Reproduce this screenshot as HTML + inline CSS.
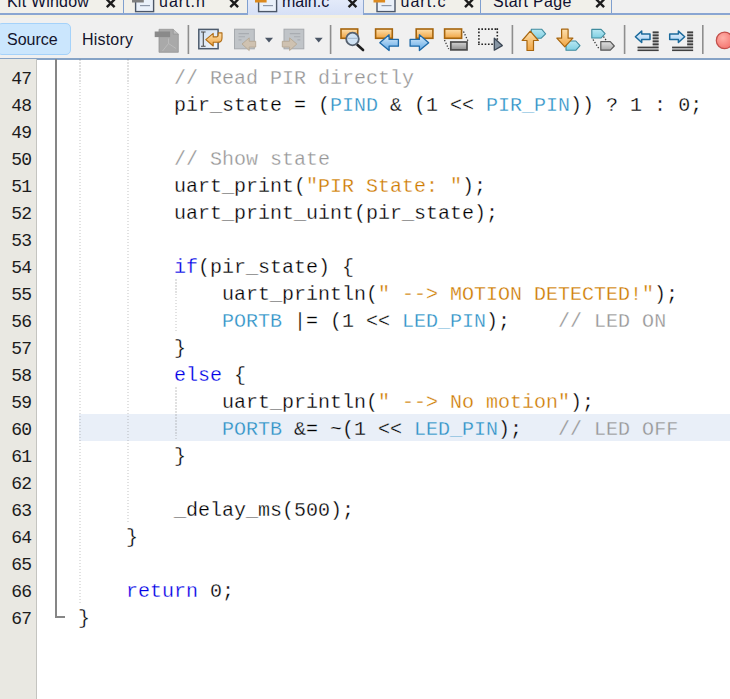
<!DOCTYPE html>
<html><head><meta charset="utf-8"><title>main.c</title>
<style>
html,body{margin:0;padding:0;}
body{width:730px;height:699px;overflow:hidden;position:relative;background:#fff;font-family:"Liberation Sans",sans-serif;}
#tabbar{position:absolute;left:0;top:0;width:730px;height:15px;background:#f0f0f0;overflow:hidden;}
#tabline{position:absolute;left:0;top:13px;width:730px;height:2px;background:#8aa6d2;}
#cream{position:absolute;left:0;top:15px;width:730px;height:3px;background:#f3f0e3;}
#toolbar{position:absolute;left:0;top:18px;width:730px;height:40px;background:#f0f0f0;}
#tbline{position:absolute;left:0;top:58px;width:730px;height:2px;background:#86a3c6;}
.tab{position:absolute;top:0;height:13px;background:#f1f0ea;border-right:1px solid #7f9fcf;box-sizing:border-box;}
.tab.sel{background:linear-gradient(#e3eaf9,#d6e0f6);border-right:none;height:15px;}
.tt{position:absolute;top:-7px;font-size:16px;line-height:18px;color:#101030;white-space:nowrap;}
.tx{position:absolute;top:-1px;width:9px;height:9px;}
#srcbtn{position:absolute;left:-3px;top:23px;width:74px;height:32px;box-sizing:border-box;border:1px solid #a5d2fa;border-radius:5px;background:#cbe6fd;}
.tbt{position:absolute;font-size:16px;line-height:20px;color:#14142c;white-space:nowrap;}
.sep{position:absolute;top:25px;width:1px;height:29px;background:#8c8c8c;}
#gutter{position:absolute;left:0;top:59px;width:36px;height:640px;background:#e9e8e2;border-right:1px solid #c4c4c0;}
#fold{position:absolute;left:55px;top:59px;width:2px;height:559px;background:#868686;}
#foldend{position:absolute;left:55px;top:616px;width:10px;height:2px;background:#868686;}
.guide{position:absolute;width:2px;margin-left:-1px;background:repeating-linear-gradient(to bottom,rgba(120,120,120,0.22) 0,rgba(120,120,120,0.22) 1.5px,rgba(120,120,120,0) 1.5px,rgba(120,120,120,0) 3px);}
#hl{position:absolute;left:79px;top:414px;width:651px;height:27px;background:#e9eff8;}
.ln{position:absolute;left:0;width:31.4px;letter-spacing:-0.7px;text-align:right;font-family:"Liberation Mono",monospace;font-size:18px;line-height:27px;height:27px;color:#1c1c1c;padding-top:3px;box-sizing:border-box;}
.cl{position:absolute;left:78px;font-family:"Liberation Mono",monospace;font-size:20px;line-height:27px;height:27px;white-space:pre;color:#000;-webkit-text-stroke:0.28px #fff;padding-top:2px;box-sizing:border-box;}
.cl.hl{-webkit-text-stroke-color:#e9eff8}
.c{color:#969696} .m{color:#2e92c7} .s{color:#ce7b00} .w{color:#0000e6} .k{color:#000}
svg{position:absolute;left:0;top:0;}
</style></head><body>
<div id="tabbar">
<div id="tabline"></div>
<div class="tab" style="left:0;width:124px"><span class="tt" style="left:7px;letter-spacing:0.2px">Kit Window</span></div>
<div class="tab" style="left:124px;width:124px"><span class="tt" style="left:35px;letter-spacing:1px">uart.h</span></div>
<div class="tab sel" style="left:248px;width:115px"><span class="tt" style="left:34px">main.c</span></div>
<div class="tab" style="left:363px;width:118px;border-left:1px solid #8fa8cf"><span class="tt" style="left:36.5px;letter-spacing:1px">uart.c</span></div>
<div class="tab" style="left:481px;width:131px"><span class="tt" style="left:12px;letter-spacing:0.3px">Start Page</span></div>

</div>
<div id="cream"></div>
<div id="toolbar"></div>
<div id="tbline"></div>
<div id="srcbtn"></div>
<div class="tbt" style="left:7px;top:30px">Source</div>
<div class="tbt" style="left:82px;top:30px;letter-spacing:0.2px">History</div>
<svg width="730" height="59" viewBox="0 0 730 59">
<defs>
<linearGradient id="gO" x1="0" y1="0" x2="0" y2="1"><stop offset="0" stop-color="#fde0ae"/><stop offset="1" stop-color="#f0a441"/></linearGradient>
<linearGradient id="gB" x1="0" y1="0" x2="0" y2="1"><stop offset="0" stop-color="#dcedfc"/><stop offset="1" stop-color="#5fa8e4"/></linearGradient>
<linearGradient id="gG" x1="0" y1="0" x2="0" y2="1"><stop offset="0" stop-color="#d4d4d4"/><stop offset="1" stop-color="#8e8e8e"/></linearGradient>
<linearGradient id="gC" x1="0" y1="0" x2="0" y2="1"><stop offset="0" stop-color="#b9e8f3"/><stop offset="1" stop-color="#7fcfe2"/></linearGradient>
<linearGradient id="gP" x1="0" y1="0" x2="1" y2="1"><stop offset="0" stop-color="#cddcf0"/><stop offset="1" stop-color="#f4f8fc"/></linearGradient>
<radialGradient id="gR" cx="0.4" cy="0.35" r="0.7"><stop offset="0" stop-color="#ffb0a8"/><stop offset="1" stop-color="#f4736e"/></radialGradient>
<pattern id="stripe" width="2" height="2" patternUnits="userSpaceOnUse"><rect width="2" height="1.1" fill="#3c3c3c"/><rect y="1.1" width="2" height="0.9" fill="#b4b4b4"/></pattern>
<linearGradient id="gB2" x1="0" y1="0" x2="0" y2="1"><stop offset="0" stop-color="#eef6fd"/><stop offset="1" stop-color="#9fcdf2"/></linearGradient>
<linearGradient id="gG2" x1="0" y1="0" x2="0" y2="1"><stop offset="0" stop-color="#e0e0e0"/><stop offset="1" stop-color="#aaaaaa"/></linearGradient>
</defs>
<path d="M188.4 25v29M330.6 25v29M512.4 25v29M624.6 25v29M702.8 25v29" stroke="#8e8e8e" stroke-width="1.6"/>
<!-- tab close X -->
<g stroke="#1c1c1c" stroke-width="2.4" stroke-linecap="butt">
<path d="M106.8 -0.6l7.8 7.8m0 -7.8l-7.8 7.8"/>
<path d="M230.3 -0.6l7.8 7.8m0 -7.8l-7.8 7.8"/>
<path d="M348.6 -0.6l7.8 7.8m0 -7.8l-7.8 7.8"/>
<path d="M465 -0.6l7.8 7.8m0 -7.8l-7.8 7.8"/>
<path d="M596.3 -0.6l7.8 7.8m0 -7.8l-7.8 7.8"/>
</g>
<!-- file icons -->
<g id="fi">
<rect x="135.6" y="-4" width="18" height="15.6" fill="#eaf1fa" stroke="#4c5768" stroke-width="1.4"/>
<path d="M140 5.6h10" stroke="#8d98aa" stroke-width="1.2"/>
<rect x="132" y="-2" width="11.8" height="4.5" fill="#7e7e7e"/>
</g>
<g>
<rect x="258.6" y="-4" width="18" height="15.6" fill="#eaf1fa" stroke="#4c5768" stroke-width="1.4"/>
<path d="M263 5.6h10" stroke="#8d98aa" stroke-width="1.2"/>
<rect x="255" y="-2" width="11.6" height="4.5" fill="#dc8a1e"/>
</g>
<g>
<rect x="377" y="-4" width="18" height="15.6" fill="#eaf1fa" stroke="#4c5768" stroke-width="1.4"/>
<path d="M381.5 5.6h10" stroke="#8d98aa" stroke-width="1.2"/>
<rect x="373.5" y="-2" width="11.6" height="4.5" fill="#dc8a1e"/>
</g>
<!-- pdf disabled -->
<path d="M159 29.3h14.2l5.1 4.8v18.2h-19.3z" fill="#a9a9a9" stroke="#959595" stroke-width="0.8"/>
<path d="M173.2 29.3v4.8h5.1" fill="#bdbdbd" stroke="#959595" stroke-width="0.8"/>
<path d="M168.5 38.5v5l-6 7.5M168.5 43.5l7.5 5" fill="none" stroke="#bcbcbc" stroke-width="0.9"/>
<rect x="154.7" y="31.5" width="15.4" height="5.6" fill="#8a8a8a"/>
<!-- last edit -->
<rect x="198.8" y="29.4" width="19.3" height="19.3" fill="url(#gP)" stroke="#4d5b6d" stroke-width="1.5"/>
<path d="M201 32h4.6M201 46.3h4.6M203.3 32v14.3" stroke="#4a4a4a" stroke-width="1.1" fill="none"/>
<path d="M205.8 39.7l7.4-6.3v3.5h3.6c1 0 1.4-.5 1.4-1.6v-2.4h3.8v5c0 3-1.6 4.4-4.4 4.4h-4.4v3.7z" fill="url(#gO)" stroke="#b06c14" stroke-width="1.1" stroke-linejoin="round"/>
<!-- back disabled -->
<rect x="234.5" y="29.2" width="19.8" height="19.6" fill="#c0c4c8" stroke="#a5a9ad" stroke-width="1"/>
<path d="M238.5 33.6h10.5M238.5 36.8h6.5M238.5 39.9h3" stroke="#a8acb1" stroke-width="1.1"/>
<path d="M242 44l7.2-6.1v3.4h6.5v5.7h-6.5v3.5z" fill="#cfc2b1" stroke="#b8ab98" stroke-width="1" stroke-linejoin="round"/>
<path d="M265 37.8h8l-4 4.8z" fill="#4b5666"/>
<!-- forward disabled -->
<rect x="284" y="29.2" width="19.8" height="19.6" fill="#c0c4c8" stroke="#a5a9ad" stroke-width="1"/>
<path d="M289.8 33.6h10.5M294 36.8h6.3M297.4 39.9h2.9" stroke="#a8acb1" stroke-width="1.1"/>
<path d="M296.8 44l-7.2-6.1v3.4h-7.3v5.7h7.3v3.5z" fill="#cfc2b1" stroke="#b8ab98" stroke-width="1" stroke-linejoin="round"/>
<path d="M314.7 37.8h8l-4 4.8z" fill="#4b5666"/>
<!-- find -->
<rect x="341" y="29" width="16.7" height="9.3" fill="url(#gO)" stroke="#a5640d" stroke-width="1.6"/>
<path d="M357.5 45l5.6 5" stroke="#1e1e1e" stroke-width="2.6" stroke-linecap="round"/>
<circle cx="352.5" cy="39" r="6.3" fill="#cfe2f3" stroke="#55606e" stroke-width="1.8"/>
<path d="M347.5 38.3h10" stroke="#9fb4c8" stroke-width="1"/>
<!-- find prev -->
<rect x="375.6" y="29" width="16.7" height="9.3" fill="url(#gO)" stroke="#a5640d" stroke-width="1.6"/>
<path d="M379.8 42.8l9.3-8v4.6h9.3v6.8h-9.3v4.4z" fill="url(#gB)" stroke="#1d69a8" stroke-width="1.3" stroke-linejoin="round"/>
<!-- find next -->
<rect x="416.2" y="29" width="16.7" height="9.3" fill="url(#gO)" stroke="#a5640d" stroke-width="1.6"/>
<path d="M428.7 42.8l-9.3-8v4.6h-9.3v6.8h9.3v4.4z" fill="url(#gB)" stroke="#1d69a8" stroke-width="1.3" stroke-linejoin="round"/>
<!-- toggle highlight -->
<path d="M463.5 31.5l4.5 9.5M444.5 40l4.2 9" stroke="#333" stroke-width="1.3" stroke-dasharray="1.3 1.7" fill="none"/>
<rect x="444.6" y="29" width="17" height="9.3" fill="url(#gO)" stroke="#a5640d" stroke-width="1.6"/>
<rect x="450.8" y="42" width="16.2" height="7.9" fill="url(#gG)" stroke="#4c4c4c" stroke-width="1.7"/>
<!-- rect select -->
<path d="M478.1 29.1h20M478.1 44.2h20M478.9 28.3v16.7M497.3 28.3v16.7" fill="none" stroke="#222" stroke-width="1.6" stroke-dasharray="1.6 1.69"/>
<path d="M494.3 38.2v12l8-4.6z" fill="#8796a5" stroke="#3b4755" stroke-width="1.3" stroke-linejoin="round"/>
<!-- prev bookmark -->
<path d="M531.3 29.2h10.3l4 4.6-4.6 4.5h-9.7z" fill="url(#gC)" stroke="#3f8b9e" stroke-width="1.1" stroke-linejoin="round"/>
<path d="M530.3 31.2l8 9.3h-4.8v10h-6.5v-10h-4.8z" fill="url(#gO)" stroke="#a8660f" stroke-width="1.2" stroke-linejoin="round"/>
<!-- next bookmark -->
<path d="M566 41h9.8l4.2 4.7-4.2 4.6h-9.8z" fill="url(#gC)" stroke="#3f8b9e" stroke-width="1.1" stroke-linejoin="round"/>
<path d="M564.8 46.9l-8-8.7h4.8v-9h6.5v9h4.8z" fill="url(#gO)" stroke="#a8660f" stroke-width="1.2" stroke-linejoin="round"/>
<!-- toggle bookmark -->
<path d="M593 39.5l6.5 10M603.5 36.5l3.5 5" stroke="#333" stroke-width="1.3" stroke-dasharray="1.3 1.7" fill="none"/>
<path d="M591.8 29.4h9.3l4 4.3-4 4.3h-9.3z" fill="url(#gC)" stroke="#3f8b9e" stroke-width="1.1" stroke-linejoin="round"/>
<path d="M600.8 41.7h9.5l4 4.3-4 4.2h-9.5z" fill="url(#gG2)" stroke="#5a5a5a" stroke-width="1.2" stroke-linejoin="round"/>
<!-- shift left -->
<path d="M652.7 31.6h5.9v19.6h-21v-4.6h15.1z" fill="#aeaeae"/>
<path d="M652.7 32.3h5.9M652.7 35.3h5.9M652.7 38.3h5.9M652.7 41.3h5.9M652.7 44.3h5.9M637.6 47.4h21M637.6 50.4h21" stroke="#404040" stroke-width="1.4"/>
<path d="M635.4 36.7l6.3-5.6v3h8.3v5.4h-8.3v3z" fill="url(#gB2)" stroke="#1b6a9c" stroke-width="1.5" stroke-linejoin="round"/>
<!-- shift right -->
<path d="M687.2 31.6h5.9v19.6h-21v-4.6h15.1z" fill="#aeaeae"/>
<path d="M687.2 32.3h5.9M687.2 35.3h5.9M687.2 38.3h5.9M687.2 41.3h5.9M687.2 44.3h5.9M672.1 47.4h21M672.1 50.4h21" stroke="#404040" stroke-width="1.4"/>
<path d="M684.7 36.7l-6.3-5.6v3h-8.7v5.4h8.7v3z" fill="url(#gB2)" stroke="#1b6a9c" stroke-width="1.5" stroke-linejoin="round"/>
<!-- record -->
<circle cx="724.6" cy="40.4" r="8.3" fill="url(#gR)" stroke="#c2504b" stroke-width="1.2"/>
</svg>

<div id="gutter"></div>
<div id="fold"></div><div id="foldend"></div>
<div id="hl"></div>
<div class="guide" style="left:80px;top:59px;height:544px"></div>
<div class="guide" style="left:128px;top:59px;height:463px"></div>
<div class="guide" style="left:176px;top:279px;height:54px"></div>
<div class="guide" style="left:176px;top:387px;height:54px"></div>
<div class="ln" style="top:63px">47</div>
<div class="ln" style="top:90px">48</div>
<div class="ln" style="top:117px">49</div>
<div class="ln" style="top:144px">50</div>
<div class="ln" style="top:171px">51</div>
<div class="ln" style="top:198px">52</div>
<div class="ln" style="top:225px">53</div>
<div class="ln" style="top:252px">54</div>
<div class="ln" style="top:279px">55</div>
<div class="ln" style="top:306px">56</div>
<div class="ln" style="top:333px">57</div>
<div class="ln" style="top:360px">58</div>
<div class="ln" style="top:387px">59</div>
<div class="ln" style="top:414px">60</div>
<div class="ln" style="top:441px">61</div>
<div class="ln" style="top:468px">62</div>
<div class="ln" style="top:495px">63</div>
<div class="ln" style="top:522px">64</div>
<div class="ln" style="top:549px">65</div>
<div class="ln" style="top:576px">66</div>
<div class="ln" style="top:603px">67</div>
<div class="cl" style="top:63px">        <span class="c">// Read PIR directly</span></div>
<div class="cl" style="top:90px">        <span class="k">pir_state = (</span><span class="m">PIND</span><span class="k"> &amp; (1 &lt;&lt; </span><span class="m">PIR_PIN</span><span class="k">)) ? 1 : 0;</span></div>
<div class="cl" style="top:144px">        <span class="c">// Show state</span></div>
<div class="cl" style="top:171px">        <span class="k">uart_print(</span><span class="s">"PIR State: "</span><span class="k">);</span></div>
<div class="cl" style="top:198px">        <span class="k">uart_print_uint(pir_state);</span></div>
<div class="cl" style="top:252px">        <span class="w">if</span><span class="k">(pir_state) {</span></div>
<div class="cl" style="top:279px">            <span class="k">uart_println(</span><span class="s">" --&gt; MOTION DETECTED!"</span><span class="k">);</span></div>
<div class="cl" style="top:306px">            <span class="m">PORTB</span><span class="k"> |= (1 &lt;&lt; </span><span class="m">LED_PIN</span><span class="k">);    </span><span class="c">// LED ON</span></div>
<div class="cl" style="top:333px">        <span class="k">}</span></div>
<div class="cl" style="top:360px">        <span class="w">else</span><span class="k"> {</span></div>
<div class="cl" style="top:387px">            <span class="k">uart_println(</span><span class="s">" --&gt; No motion"</span><span class="k">);</span></div>
<div class="cl hl" style="top:414px">            <span class="m">PORTB</span><span class="k"> &amp;= ~(1 &lt;&lt; </span><span class="m">LED_PIN</span><span class="k">);   </span><span class="c">// LED OFF</span></div>
<div class="cl" style="top:441px">        <span class="k">}</span></div>
<div class="cl" style="top:495px">        <span class="k">_delay_ms(500);</span></div>
<div class="cl" style="top:522px">    <span class="k">}</span></div>
<div class="cl" style="top:576px">    <span class="w">return</span><span class="k"> 0;</span></div>
<div class="cl" style="top:603px"><span class="k">}</span></div>

</body></html>
